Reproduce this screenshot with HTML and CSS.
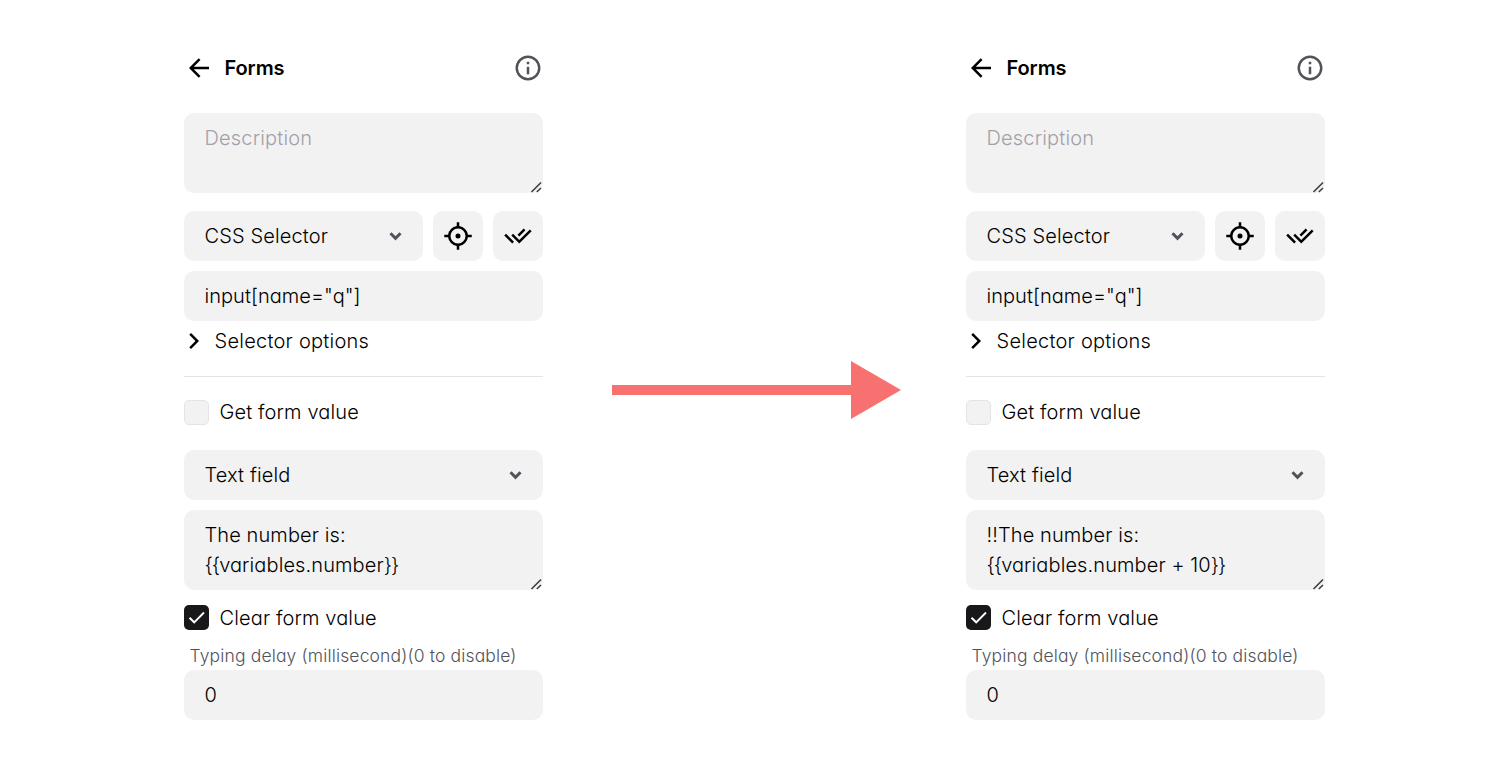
FILE: index.html
```html
<!DOCTYPE html>
<html lang="en">
<head>
<meta charset="utf-8">
<title>Forms</title>
<link rel="stylesheet" href="styles.css">
</head>
<body>
<svg class="sprite" aria-hidden="true">
  <symbol id="back" viewBox="0 0 24 24"><path d="M7.828 11H20v2H7.828l5.364 5.364-1.414 1.414L4 12l7.778-7.778 1.414 1.414z"/></symbol>
  <symbol id="info" viewBox="0 0 24 24"><path d="M12 22C6.477 22 2 17.523 2 12S6.477 2 12 2s10 4.477 10 10-4.477 10-10 10zm0-2a8 8 0 1 0 0-16 8 8 0 0 0 0 16zM11 7h2v2h-2V7zm0 4h2v6h-2v-6z"/></symbol>
  <symbol id="focus" viewBox="0 0 24 24"><path d="M13 1l.001 3.062A8.004 8.004 0 0 1 19.938 11H23v2l-3.062.001a8.004 8.004 0 0 1-6.937 6.937L13 23h-2v-3.062a8.004 8.004 0 0 1-6.938-6.937L1 13v-2h3.062A8.004 8.004 0 0 1 11 4.062V1h2zm-1 5a6 6 0 1 0 0 12 6 6 0 0 0 0-12zm0 4a2 2 0 1 1 0 4 2 2 0 0 1 0-4z"/></symbol>
  <symbol id="double" viewBox="0 0 24 24"><path d="M11.602 13.76l1.412 1.412 8.466-8.466 1.414 1.414-9.88 9.88-6.364-6.364 1.414-1.414 2.125 2.125 1.413 1.412zm.002-2.828l4.952-4.953 1.41 1.41-4.952 4.953-1.41-1.41zm-2.827 5.655L7.364 18 1 11.636l1.414-1.414 1.413 1.413-.001.001 4.951 4.951z"/></symbol>
  <symbol id="right" viewBox="0 0 24 24"><path d="M13.172 12l-4.95-4.95 1.414-1.414L16 12l-6.364 6.364-1.414-1.414z"/></symbol>
  <symbol id="down" viewBox="0 0 14 14"><path d="M1.500 4.300L6.500 9.300l5-5" fill="none" stroke="currentColor" stroke-width="3"/></symbol>
  <symbol id="check" viewBox="0 0 25 25"><path d="M5.500 12.700L10.200 17.300l9.800-9.800" fill="none" stroke="currentColor" stroke-width="1.900"/></symbol>
  <symbol id="grip" viewBox="0 0 12 12"><path d="M1.500 11L11 1.500M6.800 11L11 7" fill="none" stroke="currentColor" stroke-width="1.600"/></symbol>
</svg>
<main class="stage">
  <section class="panel">
    <header class="header"><svg class="icon"><use href="#back"/></svg><h1 class="title">Forms</h1><svg class="icon info"><use href="#info"/></svg></header>
    <div class="field area description"><span>Description</span><svg class="grip"><use href="#grip"/></svg></div>
    <div class="row">
      <div class="field select"><span>CSS Selector</span><svg class="caret"><use href="#down"/></svg></div>
      <div class="button"><svg class="icon"><use href="#focus"/></svg></div>
      <div class="button"><svg class="icon"><use href="#double"/></svg></div>
    </div>
    <div class="field query">input[name="q"]</div>
    <div class="options"><svg class="icon"><use href="#right"/></svg><span>Selector options</span></div>
    <div class="check get"><span class="box"></span><span>Get form value</span></div>
    <div class="field select type"><span>Text field</span><svg class="caret"><use href="#down"/></svg></div>
    <div class="field area value"><span>The number is:<br><span class="braces">{{</span>variables.number<span class="braces">}}</span></span><svg class="grip"><use href="#grip"/></svg></div>
    <div class="check clear"><span class="box checked"><svg class="tick"><use href="#check"/></svg></span><span>Clear form value</span></div>
    <div class="label">Typing delay (millisecond)(0 to disable)</div>
    <div class="field">0</div>
  </section>
  <svg class="arrow" viewBox="0 0 289 58"><path d="M0 24h239V0l50 29-50 29V34H0z"/></svg>
  <section class="panel">
    <header class="header"><svg class="icon"><use href="#back"/></svg><h1 class="title">Forms</h1><svg class="icon info"><use href="#info"/></svg></header>
    <div class="field area description"><span>Description</span><svg class="grip"><use href="#grip"/></svg></div>
    <div class="row">
      <div class="field select"><span>CSS Selector</span><svg class="caret"><use href="#down"/></svg></div>
      <div class="button"><svg class="icon"><use href="#focus"/></svg></div>
      <div class="button"><svg class="icon"><use href="#double"/></svg></div>
    </div>
    <div class="field query">input[name="q"]</div>
    <div class="options"><svg class="icon"><use href="#right"/></svg><span>Selector options</span></div>
    <div class="check get"><span class="box"></span><span>Get form value</span></div>
    <div class="field select type"><span>Text field</span><svg class="caret"><use href="#down"/></svg></div>
    <div class="field area value"><span>!!The number is:<br><span class="braces">{{</span>variables.number + 10<span class="braces">}}</span></span><svg class="grip"><use href="#grip"/></svg></div>
    <div class="check clear"><span class="box checked"><svg class="tick"><use href="#check"/></svg></span><span>Clear form value</span></div>
    <div class="label">Typing delay (millisecond)(0 to disable)</div>
    <div class="field">0</div>
  </section>
</main>
</body>
</html>
```
FILE: styles.css
```css
* { box-sizing: border-box; }
body { margin: 0; background: #fff; color: #000; font: 350 20px/30px Inter, sans-serif; font-feature-settings: "cv11"; letter-spacing: 0.13px; }
.sprite { position: absolute; width: 0; height: 0; }
.stage { display: flex; height: 780px; padding: 53px 0 0 184px; overflow: hidden; }
.panel { width: 359px; flex: none; white-space: nowrap; }
.icon { width: 30px; height: 30px; fill: currentColor; flex: none; display: block; }
.header { display: flex; align-items: center; height: 30px; margin-bottom: 30px; }
.title { margin: 0 auto 0 10.5px; font-size: 20px; font-weight: 600; line-height: 30px; letter-spacing: -0.1px; }
.info { color: #52525b; }
.field { height: 50px; padding: 10px 20px 10px 20.5px; border-radius: 10px; background: #f2f2f2; }
.area { position: relative; height: 80px; }
.description { color: #a1a1aa; margin-bottom: 18px; letter-spacing: 0.18px; }
.grip { position: absolute; right: 1px; bottom: 0; width: 12px; height: 12px; color: #3f3f46; }
.row { display: flex; gap: 10px; margin-bottom: 10px; }
.select { display: flex; justify-content: space-between; align-items: center; flex: 1; }
.caret { width: 14px; height: 14px; color: #52525b; }
.button { width: 50px; height: 50px; padding: 10px; border-radius: 10px; background: #f2f2f2; }
.query { margin-bottom: 5px; letter-spacing: 0.04px; }
.options { display: flex; align-items: center; gap: 5.5px; height: 51px; padding-bottom: 20px; margin-bottom: 23px; border-bottom: 1px solid #e4e4e7; letter-spacing: 0.25px; }
.options .icon { margin-left: -5px; }
.check { display: flex; align-items: center; gap: 10.5px; height: 25px; }
.box { width: 25px; height: 25px; border: 1px solid #e4e4e7; border-radius: 5px; background: #f2f2f2; }
.checked { border: 0; background: #18181b; color: #fff; }
.tick { display: block; width: 25px; height: 25px; }
.get { margin-bottom: 25px; }
.get span:last-child { padding-bottom: 1px; }
.type { margin-bottom: 10px; }
.value { margin-bottom: 15px; letter-spacing: 0.1px; }
.braces { letter-spacing: -1px; }
.clear { margin-bottom: 13px; }
.label { height: 27px; padding-left: 5.5px; font-size: 17.5px; line-height: 25px; color: #52525b; letter-spacing: 0.15px; }
.arrow { width: 289px; height: 58px; margin: 308px 65px 0 69px; flex: none; fill: #f87171; }
```
